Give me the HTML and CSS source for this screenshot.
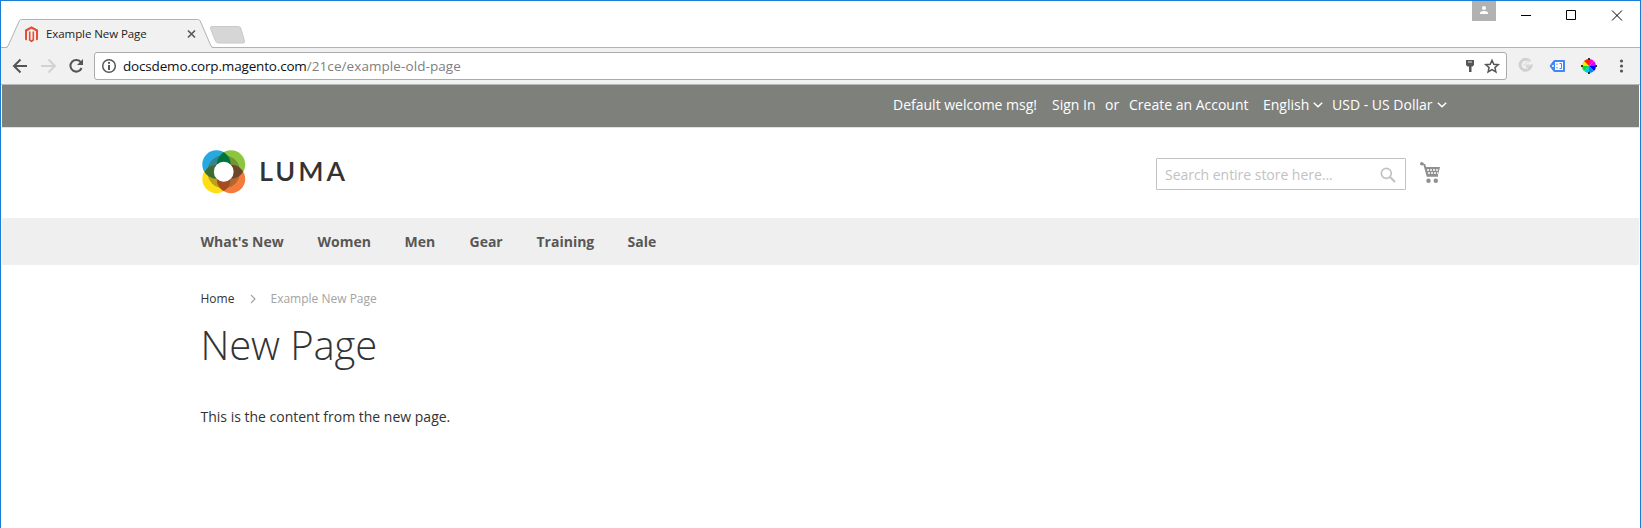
FILE: index.html
```html
<!DOCTYPE html>
<html lang="en">
<head>
<meta charset="utf-8">
<title>Example New Page</title>
<link rel="stylesheet" href="styles.css">
</head>
<body>
<div class="window">
  <div class="titlebar">
    <svg class="tabs" width="250" height="31" viewBox="0 0 250 31">
      <path d="M-1 29.500H5.500Q7 29.500 8 27.500L19.500 1.500Q20 .5 21.500 .5H197.500Q199 .5 200 1.500L211 27.500Q212 29.500 214 29.500H251V31H-1Z" fill="#f1f1f1"/>
      <path d="M-1 28.500H5.500Q7 28.500 8 27L19.500 1.500Q20 .5 21.500 .5H197.500Q199 .5 200 1.500L211 27Q212 28.500 214 28.500H251" fill="none" stroke="#b2b2b2"/>
      <path d="M212 7.500H238.500Q240 7.500 240.700 9L244.500 22Q245 24 243 24H218.500Q216.500 24 215.500 22L210.500 9.500Q210 7.500 212 7.500Z" fill="#d6d6d6" stroke="#c9c9c9"/>
      <path d="M25 20.500V10.800L31.500 7.200L38 10.800V20.500L36 21.500V12.200L31.500 9.800L27 12.200V21.500Z" fill="#ec4a30"/>
      <path d="M29.700 12.500V21L31.500 22.200L33.300 21V12.500" fill="none" stroke="#ec4a30" stroke-width="1.600"/>
      <path d="M188 11.500L195 18.500M195 11.500L188 18.500" stroke="#5a5a5a" stroke-width="1.700"/>
    </svg>
    <span class="tab-title">Example New Page</span>
    <svg class="controls" width="170" height="30" viewBox="0 0 170 30">
      <path d="M0 0H24V20H0Z" fill="#b2b2b2"/>
      <circle cx="12" cy="7" r="2" fill="#fff"/>
      <path d="M8 13V12Q8 10 12 10T16 12V13Z" fill="#fff"/>
      <path d="M49 14.500H59M94.500 9.500H103.500V18.500H94.500ZM140 9.500L150 19.500M150 9.500L140 19.500" fill="none" stroke="#000"/>
    </svg>
  </div>
  <div class="toolbar">
    <svg class="nav-icons" width="92" height="34" viewBox="0 0 92 34">
      <path d="M26 18H14M19.500 11.500L13 18L19.500 24.500" fill="none" stroke="#555" stroke-width="2"/>
      <path d="M40 18H53M47.500 11.500L54 18L47.500 24.500" fill="none" stroke="#d2d2d2" stroke-width="2"/>
      <path d="M80 14.500A5.800 5.800 0 1 0 80.600 20" fill="none" stroke="#555" stroke-width="2"/>
      <path d="M82 11V17H76Z" fill="#555"/>
    </svg>
    <div class="address">
      <svg class="info" width="16" height="16" viewBox="0 0 16 16"><circle cx="8" cy="8" r="6.300" fill="none" stroke="#555" stroke-width="1.500"/><path d="M8 7V12M8 4V5.800" stroke="#555" stroke-width="2"/></svg>
      <span class="url"><span class="host">docsdemo.corp.magento.com</span><span class="path">/21ce/example-old-page</span></span>
      <svg class="address-icons" width="40" height="26" viewBox="0 0 40 26">
        <path d="M2 7H10V12L8.500 13.500H7.500V19H5V13.500H3.500L2 12Z" fill="#555"/><path d="M4 9H8" stroke="#ddd"/>
        <path d="M28 7.300L29.800 11.300L34.200 11.700L30.900 14.600L31.900 18.900L28 16.600L24.100 18.900L25.100 14.600L21.800 11.700L26.200 11.300Z" fill="none" stroke="#555" stroke-width="1.500"/>
      </svg>
    </div>
    <svg class="extensions" width="132" height="34" viewBox="0 0 132 34">
      <path d="M22 13.500A5.500 5.500 0 1 0 23 18H18" fill="none" stroke="#d0d0d0" stroke-width="3"/>
      <path d="M21 12L16 17H23" fill="none" stroke="#e3e3e3" stroke-width="1.500"/>
      <path d="M42 18L46 12.500H56.500V23.500H46Z" fill="#4387f4" stroke="#4387f4" stroke-linejoin="round"/>
      <path d="M47 14H55V22H47Z" fill="#fff"/><path d="M49 15.500V17M49 19V20.500M51.500 15.500H53.500V20.500H51.500" fill="none" stroke="#4387f4"/>
      <circle cx="45" cy="18" r="1" fill="#fff"/>
      <path d="M81 18V11A7 7 0 0 1 86 13Z" fill="#f0d"/><path d="M81 18L86 13A7 7 0 0 1 88 18Z" fill="#d0f"/>
      <path d="M81 18H88A7 7 0 0 1 86 23Z" fill="#00f"/><path d="M81 18L86 23A7 7 0 0 1 81 25Z" fill="#08e"/>
      <path d="M81 18V25A7 7 0 0 1 76 23Z" fill="#0ce"/><path d="M81 18L76 23A7 7 0 0 1 74 18Z" fill="#0d3"/>
      <path d="M81 18H74A7 7 0 0 1 76 13Z" fill="#ee0"/><path d="M81 18L76 13A7 7 0 0 1 81 11Z" fill="#f20"/>
      <path d="M81 10V12M81 24V26M73 18H75M87 18H89" stroke="#333" stroke-width="2"/>
      <circle cx="113.500" cy="13" r="1.600" fill="#555"/><circle cx="113.500" cy="18" r="1.600" fill="#555"/><circle cx="113.500" cy="23" r="1.600" fill="#555"/>
    </svg>
  </div>
  <div class="panel">
    <span class="welcome">Default welcome msg!</span>
    <span class="signin">Sign In</span>
    <span class="or">or</span>
    <span class="create">Create an Account</span>
    <span class="language">English</span>
    <svg class="chevron" width="10" height="6" viewBox="0 0 10 6"><path d="M.8 .8L5 4.800L9.200 .8" fill="none" stroke="#fff" stroke-width="1.500"/></svg>
    <span class="currency">USD - US Dollar</span>
    <svg class="chevron" width="10" height="6" viewBox="0 0 10 6"><path d="M.8 .8L5 4.800L9.200 .8" fill="none" stroke="#fff" stroke-width="1.500"/></svg>
  </div>
  <div class="header">
    <svg class="logo" width="148" height="46" viewBox="0 0 148 46">
      <defs>
        <clipPath id="tl"><circle cx="15.500" cy="15.500" r="14.200"/></clipPath>
        <clipPath id="br"><circle cx="30" cy="30" r="14.200"/></clipPath>
      </defs>
      <circle cx="15.500" cy="15.500" r="14.200" fill="#26a8e0"/>
      <circle cx="30" cy="15.500" r="14.200" fill="#8cc63f"/>
      <circle cx="15.500" cy="30" r="14.200" fill="#ffde17"/>
      <circle cx="30" cy="30" r="14.200" fill="#f47b3b"/>
      <circle cx="22.750" cy="22.750" r="16.500" fill="#4c4a24" opacity=".4"/>
      <g clip-path="url(#tl)"><circle cx="30" cy="15.500" r="14.200" fill="#00733e"/><circle cx="15.500" cy="30" r="14.200" fill="#3d6b35"/></g>
      <g clip-path="url(#br)"><circle cx="30" cy="15.500" r="14.200" fill="#6d4528"/><circle cx="15.500" cy="30" r="14.200" fill="#a34c20"/></g>
      <circle cx="22.750" cy="22.750" r="9.900" fill="#fff"/>
      <text class="brand" x="58" y="31.500" textLength="86" lengthAdjust="spacing">LUMA</text>
    </svg>
    <div class="search">
      <span class="placeholder">Search entire store here...</span>
      <svg width="16" height="16" viewBox="0 0 16 16"><circle cx="6.300" cy="6.300" r="5" fill="none" stroke="#c2c2c2" stroke-width="1.700"/><path d="M10 10L15 15" stroke="#c2c2c2" stroke-width="2.200"/></svg>
    </div>
    <svg class="cart" width="21" height="22" viewBox="0 0 21 22">
      <path d="M1.500 1.500L4.500 3L7.500 13.800H18" fill="none" stroke="#8f8f8f" stroke-width="1.900"/>
      <circle cx="1.800" cy="1.800" r="1.800" fill="#8f8f8f"/>
      <path d="M4.500 5H20L17.800 13.500H7Z" fill="#8f8f8f"/>
      <path d="M7 8H18.500M8 11H18" stroke="#fff" stroke-width="1.300" stroke-dasharray="2 1"/>
      <circle cx="8.500" cy="18.700" r="2.200" fill="#8f8f8f"/><circle cx="15.800" cy="18.700" r="2.200" fill="#8f8f8f"/>
    </svg>
  </div>
  <div class="menu">
    <span class="new">What's New</span><span class="women">Women</span><span class="men">Men</span><span class="gear">Gear</span><span class="training">Training</span><span>Sale</span>
  </div>
  <div class="content">
    <div class="breadcrumbs">
      <span class="home">Home</span>
      <svg width="6" height="10" viewBox="0 0 6 10"><path d="M1 1L5 5L1 9" fill="none" stroke="#a3a3a3" stroke-width="1.200"/></svg>
      <span class="current">Example New Page</span>
    </div>
    <h1>New Page</h1>
    <p>This is the content from the new page.</p>
  </div>
</div>
</body>
</html>
```
FILE: styles.css
```css
* { box-sizing: border-box; }
body { margin: 0; background: #fff; font: 14px/20px "Open Sans", sans-serif; color: #333; }
.window { width: 1641px; height: 528px; overflow: hidden; border: 1px solid #1a7fd4; border-bottom: 0; white-space: nowrap; }
svg { flex: none; display: block; }
span { flex: none; }
.titlebar { height: 47px; display: flex; position: relative; border-bottom: 1px solid #b2b2b2; }
.tabs { margin: 18px 0 0 -1px; }
.tab-title { position: absolute; left: 45px; top: 23px; font-size: 11.5px; letter-spacing: -.08px; color: #222; }
.controls { margin-left: 1222px; }
.toolbar { height: 37px; display: flex; background: #f1f1f1; border-bottom: 1px solid #b8b8b8; }
.nav-icons { width: 92px; }
.address { width: 1413px; height: 28px; margin: 4px 0 0 1px; border: 1px solid #ababab; border-radius: 3px; background: #fff; display: flex; align-items: center; }
.info { margin-left: 6px; }
.url { margin-left: 6px; width: 338px; font-size: 13.5px; color: #111; }
.host { letter-spacing: -.17px; }
.path { color: #808080; letter-spacing: .08px; }
.address-icons { margin-left: 1003px; }
.extensions { margin-left: 1px; }
.panel { height: 43px; margin: 0 1px; padding-left: 891px; padding-bottom: 3px; display: flex; align-items: center; background: #7e807c; border-bottom: 1px solid #e2e2e2; color: #fff; }
.welcome { width: 159px; }
.signin { width: 53px; }
.or { width: 24px; }
.create { width: 134px; }
.language { width: 50px; }
.currency { margin-left: 9px; width: 105px; }
.header { height: 90px; display: flex; padding-left: 200px; }
.logo { margin-top: 21px; }
.brand { font: 600 27px "Lato", sans-serif; fill: #333; }
.search { width: 250px; height: 32px; margin: 30px 0 0 807px; padding: 1px 9px 0 8px; border: 1px solid #c2c2c2; border-radius: 1px; display: flex; align-items: center; justify-content: space-between; color: #c2c2c2; }
.placeholder { letter-spacing: -.03px; }
.cart { margin: 34px 0 0 14px; }
.menu { height: 47px; margin: 0 1px; padding: 0 0 0 198.500px; display: flex; align-items: center; background: #efefef; color: #575757; font-weight: 700; }
.new { width: 117px; }
.women { width: 87px; }
.men { width: 65px; }
.gear { width: 67px; }
.training { width: 91px; }
.content { padding: 24px 0 0 199.500px; }
.breadcrumbs { display: flex; align-items: center; height: 20px; font-size: 12px; }
.home { width: 49px; }
.current { margin-left: 15px; color: #a3a3a3; }
h1 { margin: 14px 0 0; font-size: 40px; line-height: 44px; font-weight: 300; letter-spacing: -.1px; }
p { margin: 40px 0 0; }
```
